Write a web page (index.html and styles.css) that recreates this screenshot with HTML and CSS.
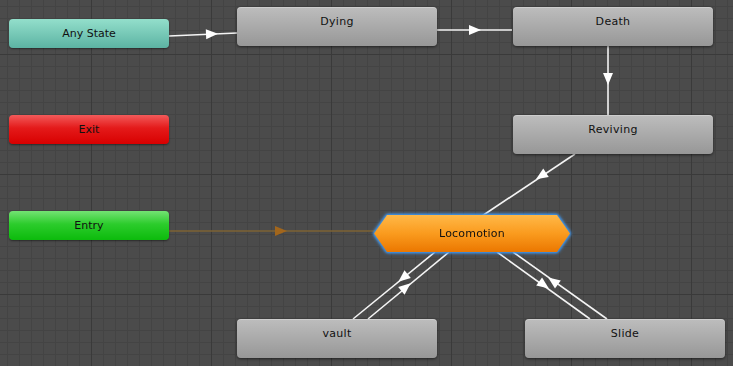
FILE: index.html
```html
<!DOCTYPE html>
<html lang="en">
<head>
  <meta charset="UTF-8">
  <title>Animator - Base Layer</title>
  <link rel="stylesheet" href="styles.css">
</head>
<body>

  <div class="graph">

    <!-- transitions -->
    <svg class="links" width="733" height="366" viewBox="0 0 733 366">
      <g class="wire">
        <line x1="169" y1="36" x2="237" y2="33"/>
        <line x1="437" y1="30" x2="512" y2="30"/>
        <line x1="608" y1="45" x2="608" y2="115"/>
        <line x1="575" y1="154" x2="482" y2="216"/>
        <line x1="435" y1="252" x2="353" y2="319"/>
        <line x1="449" y1="252" x2="368" y2="319"/>
        <line x1="497" y1="252" x2="590" y2="319"/>
        <line x1="513" y1="252" x2="607" y2="319"/>
      </g>
      <g class="head">
        <polygon points="-6,-5 6,0 -6,5" transform="translate(212 34) rotate(-2.5)"/>
        <polygon points="-6,-5 6,0 -6,5" transform="translate(475 30)"/>
        <polygon points="-6,-5 6,0 -6,5" transform="translate(608 79) rotate(90)"/>
        <polygon points="-6,-5 6,0 -6,5" transform="translate(541 176) rotate(146.7)"/>
        <polygon points="-6,-5 6,0 -6,5" transform="translate(403 278) rotate(140.7)"/>
        <polygon points="-6,-5 6,0 -6,5" transform="translate(406 287) rotate(-39.6)"/>
        <polygon points="-6,-5 6,0 -6,5" transform="translate(544 285) rotate(35.8)"/>
        <polygon points="-6,-5 6,0 -6,5" transform="translate(553 281) rotate(-144.5)"/>
      </g>
      <line class="entry-wire" x1="169" y1="231" x2="375" y2="231"/>
      <polygon class="entry-head" points="-6,-5 6,0 -6,5" transform="translate(281 231)"/>
    </svg>

    <!-- special states -->
    <div class="node special any-state">Any State</div>
    <div class="node special exit">Exit</div>
    <div class="node special entry">Entry</div>

    <!-- states -->
    <div class="node state dying">Dying</div>
    <div class="node state death">Death</div>
    <div class="node state reviving">Reviving</div>
    <div class="node state vault">vault</div>
    <div class="node state slide">Slide</div>

    <!-- default state -->
    <div class="node locomotion">
      <div class="hex">Locomotion</div>
    </div>

  </div>

</body>
</html>
```

FILE: styles.css
```css
* {
  margin: 0;
  padding: 0;
  box-sizing: border-box;
}

body {
  background: #4a4a4a;
  font-family: "DejaVu Sans", Verdana, sans-serif;
  font-size: 11px;
}

/* Animator canvas with minor / major grid */
.graph {
  position: relative;
  width: 733px;
  height: 366px;
  overflow: hidden;
  background-color: #4b4b4b;
  background-image:
    linear-gradient(to right, #3a3a3a 1px, transparent 1px),
    linear-gradient(to bottom, #3a3a3a 1px, transparent 1px),
    linear-gradient(to right, #444444 1px, transparent 1px),
    linear-gradient(to bottom, #444444 1px, transparent 1px);
  background-size: 120px 120px, 120px 120px, 12px 12px, 12px 12px;
  background-position: 91px 54px, 91px 54px, 7px 6px, 7px 6px;
}

.links {
  position: absolute;
  top: 0;
  left: 0;
}

.wire line {
  stroke: #f4f4f4;
  stroke-width: 1.6;
}

.head polygon {
  fill: #ffffff;
}

.entry-wire {
  stroke: #7c6233;
  stroke-width: 1.6;
}

.entry-head {
  fill: #a2661c;
}

/* Nodes */
.node {
  position: absolute;
  color: #111111;
  text-align: center;
  border-radius: 4px;
}

.special {
  width: 160px;
  height: 29px;
  line-height: 29px;
  left: 9px;
  box-shadow: 0 1px 2px rgba(0, 0, 0, 0.45);
}

.any-state {
  top: 19px;
  background: linear-gradient(#93dfcb, #5cb3a3);
}

.exit {
  top: 115px;
  background: linear-gradient(#f25a5a 0%, #e41a1a 45%, #d80000 100%);
}

.entry {
  top: 211px;
  background: linear-gradient(#74e274 0%, #2ccc2c 45%, #0cbb0c 100%);
}

.state {
  width: 200px;
  height: 39px;
  padding-top: 8px;
  line-height: 14px;
  letter-spacing: 0.3px;
  background: linear-gradient(#bdbdbd, #979797);
  box-shadow: 0 1px 3px rgba(0, 0, 0, 0.55), inset 0 1px 0 rgba(255, 255, 255, 0.25);
}

.dying    { left: 237px; top: 7px; }
.death    { left: 513px; top: 7px; }
.reviving { left: 513px; top: 115px; }
.vault    { left: 237px; top: 319px; }
.slide    { left: 525px; top: 319px; }

/* Default state: orange hexagon with blue selection glow */
.locomotion {
  left: 374px;
  top: 215px;
  width: 196px;
  height: 37px;
  border-radius: 0;
  filter: drop-shadow(0 0 1px #3a90e6) drop-shadow(0 0 1px #3a90e6) drop-shadow(0 0 1.5px #4a98e6);
}

.locomotion .hex {
  width: 100%;
  height: 100%;
  line-height: 37px;
  letter-spacing: 0.2px;
  background: linear-gradient(#ffb848 0%, #fa9b1e 50%, #eb7700 100%);
  clip-path: polygon(13px 0, calc(100% - 13px) 0, 100% 50%, calc(100% - 13px) 100%, 13px 100%, 0 50%);
}
```
